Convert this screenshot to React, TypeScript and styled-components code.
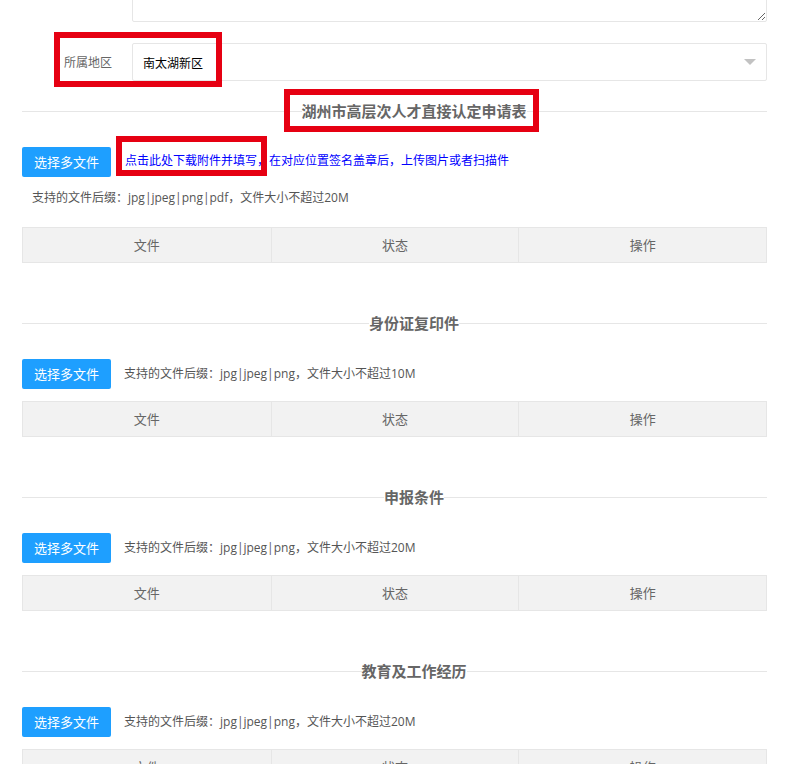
import styled, { createGlobalStyle } from "styled-components";

const GlobalStyle = createGlobalStyle`
  html, body {
    margin: 0;
    padding: 0;
    background: #fff;
    overflow: hidden;
  }
  body {
    font-family: "Microsoft YaHei", "Noto Sans CJK SC", "Noto Sans", sans-serif;
    color: #666;
  }
  * {
    box-sizing: border-box;
  }
`;

const sectionList = [
  {
    title: "湖州市高层次人才直接认定申请表",
    note: "支持的文件后缀：jpg|jpeg|png|pdf，文件大小不超过20M",
    withTemplate: true,
  },
  {
    title: "身份证复印件",
    note: "支持的文件后缀：jpg|jpeg|png，文件大小不超过10M",
    withTemplate: false,
  },
  {
    title: "申报条件",
    note: "支持的文件后缀：jpg|jpeg|png，文件大小不超过20M",
    withTemplate: false,
  },
  {
    title: "教育及工作经历",
    note: "支持的文件后缀：jpg|jpeg|png，文件大小不超过20M",
    withTemplate: false,
  },
];

const tableColumns = ["文件", "状态", "操作"];

const App = () => {
  return (
    <>
      <GlobalStyle />
      <PageLayout>
        <FormRow>
          <FormLabel />
          <TextArea defaultValue="" />
        </FormRow>

        <FormRow $top={21}>
          <FormLabel>所属地区</FormLabel>
          <SelectBox>
            <SelectValue>南太湖新区</SelectValue>
            <SelectArrow />
          </SelectBox>
          <Marker $left={32} $top={-11} $width={168} $height={55} />
        </FormRow>

        {sectionList.map((section, idx) => (
          <UploadSection key={idx} $first={idx === 0}>
            <SectionTitle>
              <TitleLine $lead />
              <TitleText>
                {section.title}
                {section.withTemplate && (
                  <Marker $left={-18} $top={-12} $width={255} $height={43} />
                )}
              </TitleText>
              <TitleLine />
            </SectionTitle>

            <UploadRow>
              <UploadButton type="button">选择多文件</UploadButton>
              {section.withTemplate ? (
                <TemplateLink>
                  <MarkedText>
                    点击此处下载附件并填写，
                    <Marker $left={-9} $top={-15} $width={151} $height={40} />
                  </MarkedText>
                  在对应位置签名盖章后，上传图片或者扫描件
                </TemplateLink>
              ) : (
                <FileNote>{section.note}</FileNote>
              )}
            </UploadRow>

            {section.withTemplate && <BlockNote>{section.note}</BlockNote>}

            <FileTable $top={section.withTemplate ? 19 : 12}>
              {tableColumns.map((col) => (
                <HeadCell key={col}>{col}</HeadCell>
              ))}
            </FileTable>
          </UploadSection>
        ))}
      </PageLayout>
    </>
  );
};

export default App;

const PageLayout = styled.div`
  margin-top: -78px;
  padding: 0 20px 40px 22px;
`;

const FormRow = styled.div<{ $top?: number }>`
  position: relative;
  display: flex;
  align-items: stretch;
  margin-top: ${(props) => props.$top ?? 0}px;
`;

const FormLabel = styled.label`
  flex: 0 0 110px;
  padding-right: 20px;
  text-align: right;
  font-size: 12px;
  line-height: 38px;
  color: #666;
`;

const TextArea = styled.textarea`
  flex: 1;
  height: 100px;
  border: 1px solid #e6e6e6;
  border-radius: 2px;
  resize: vertical;
  outline: none;
  font-family: inherit;
`;

const SelectBox = styled.div`
  position: relative;
  flex: 1;
  height: 38px;
  border: 1px solid #e6e6e6;
  border-radius: 2px;
  padding-left: 10px;
  display: flex;
  align-items: center;
`;

const SelectValue = styled.span`
  font-size: 12px;
  color: #000;
`;

const SelectArrow = styled.i`
  position: absolute;
  right: 10px;
  top: 50%;
  margin-top: -3px;
  width: 0;
  height: 0;
  border-style: solid;
  border-width: 6px 6px 0 6px;
  border-color: #c2c2c2 transparent transparent transparent;
`;

const Marker = styled.span<{
  $left: number;
  $top: number;
  $width: number;
  $height: number;
}>`
  position: absolute;
  left: ${(props) => props.$left}px;
  top: ${(props) => props.$top}px;
  width: ${(props) => props.$width}px;
  height: ${(props) => props.$height}px;
  border: 6px solid #e60012;
  pointer-events: none;
`;

const UploadSection = styled.section<{ $first: boolean }>`
  margin-top: ${(props) => (props.$first ? 20 : 50)}px;
`;

const SectionTitle = styled.div`
  display: flex;
  align-items: center;
  height: 20px;
`;

const TitleLine = styled.span<{ $lead?: boolean }>`
  flex: ${(props) => (props.$lead ? "1 1 39px" : "1 1 0")};
  height: 1px;
  background: #e6e6e6;
`;

const TitleText = styled.span`
  position: relative;
  font-size: 15px;
  font-weight: bold;
  line-height: 20px;
  color: #666;
  white-space: nowrap;
`;

const UploadRow = styled.div`
  display: flex;
  align-items: center;
  margin-top: 26px;
`;

const UploadButton = styled.button`
  height: 30px;
  padding: 0 12px;
  border: none;
  border-radius: 2px;
  background-color: #1e9fff;
  color: #fff;
  font-family: inherit;
  font-size: 13px;
  line-height: 30px;
  white-space: nowrap;
  cursor: pointer;
`;

const TemplateLink = styled.a`
  margin-left: 14px;
  margin-top: -4px;
  font-size: 12px;
  line-height: 20px;
  color: #0000ff;
  text-decoration: none;
  cursor: pointer;
`;

const MarkedText = styled.span`
  position: relative;
`;

const FileNote = styled.span`
  margin-left: 13px;
  font-family: "Open Sans", "Noto Sans CJK SC", sans-serif;
  font-size: 12px;
  line-height: 20px;
  color: #555;
`;

const BlockNote = styled.div`
  margin-top: 11px;
  padding-left: 10px;
  font-family: "Open Sans", "Noto Sans CJK SC", sans-serif;
  font-size: 12px;
  line-height: 20px;
  color: #555;
`;

const FileTable = styled.div<{ $top: number }>`
  display: grid;
  grid-template-columns: repeat(3, 1fr);
  margin-top: ${(props) => props.$top}px;
  border: 1px solid #e6e6e6;
  background-color: #f2f2f2;
`;

const HeadCell = styled.div`
  height: 34px;
  line-height: 34px;
  text-align: center;
  font-size: 13px;
  color: #666;

  & + & {
    border-left: 1px solid #e6e6e6;
  }
`;
